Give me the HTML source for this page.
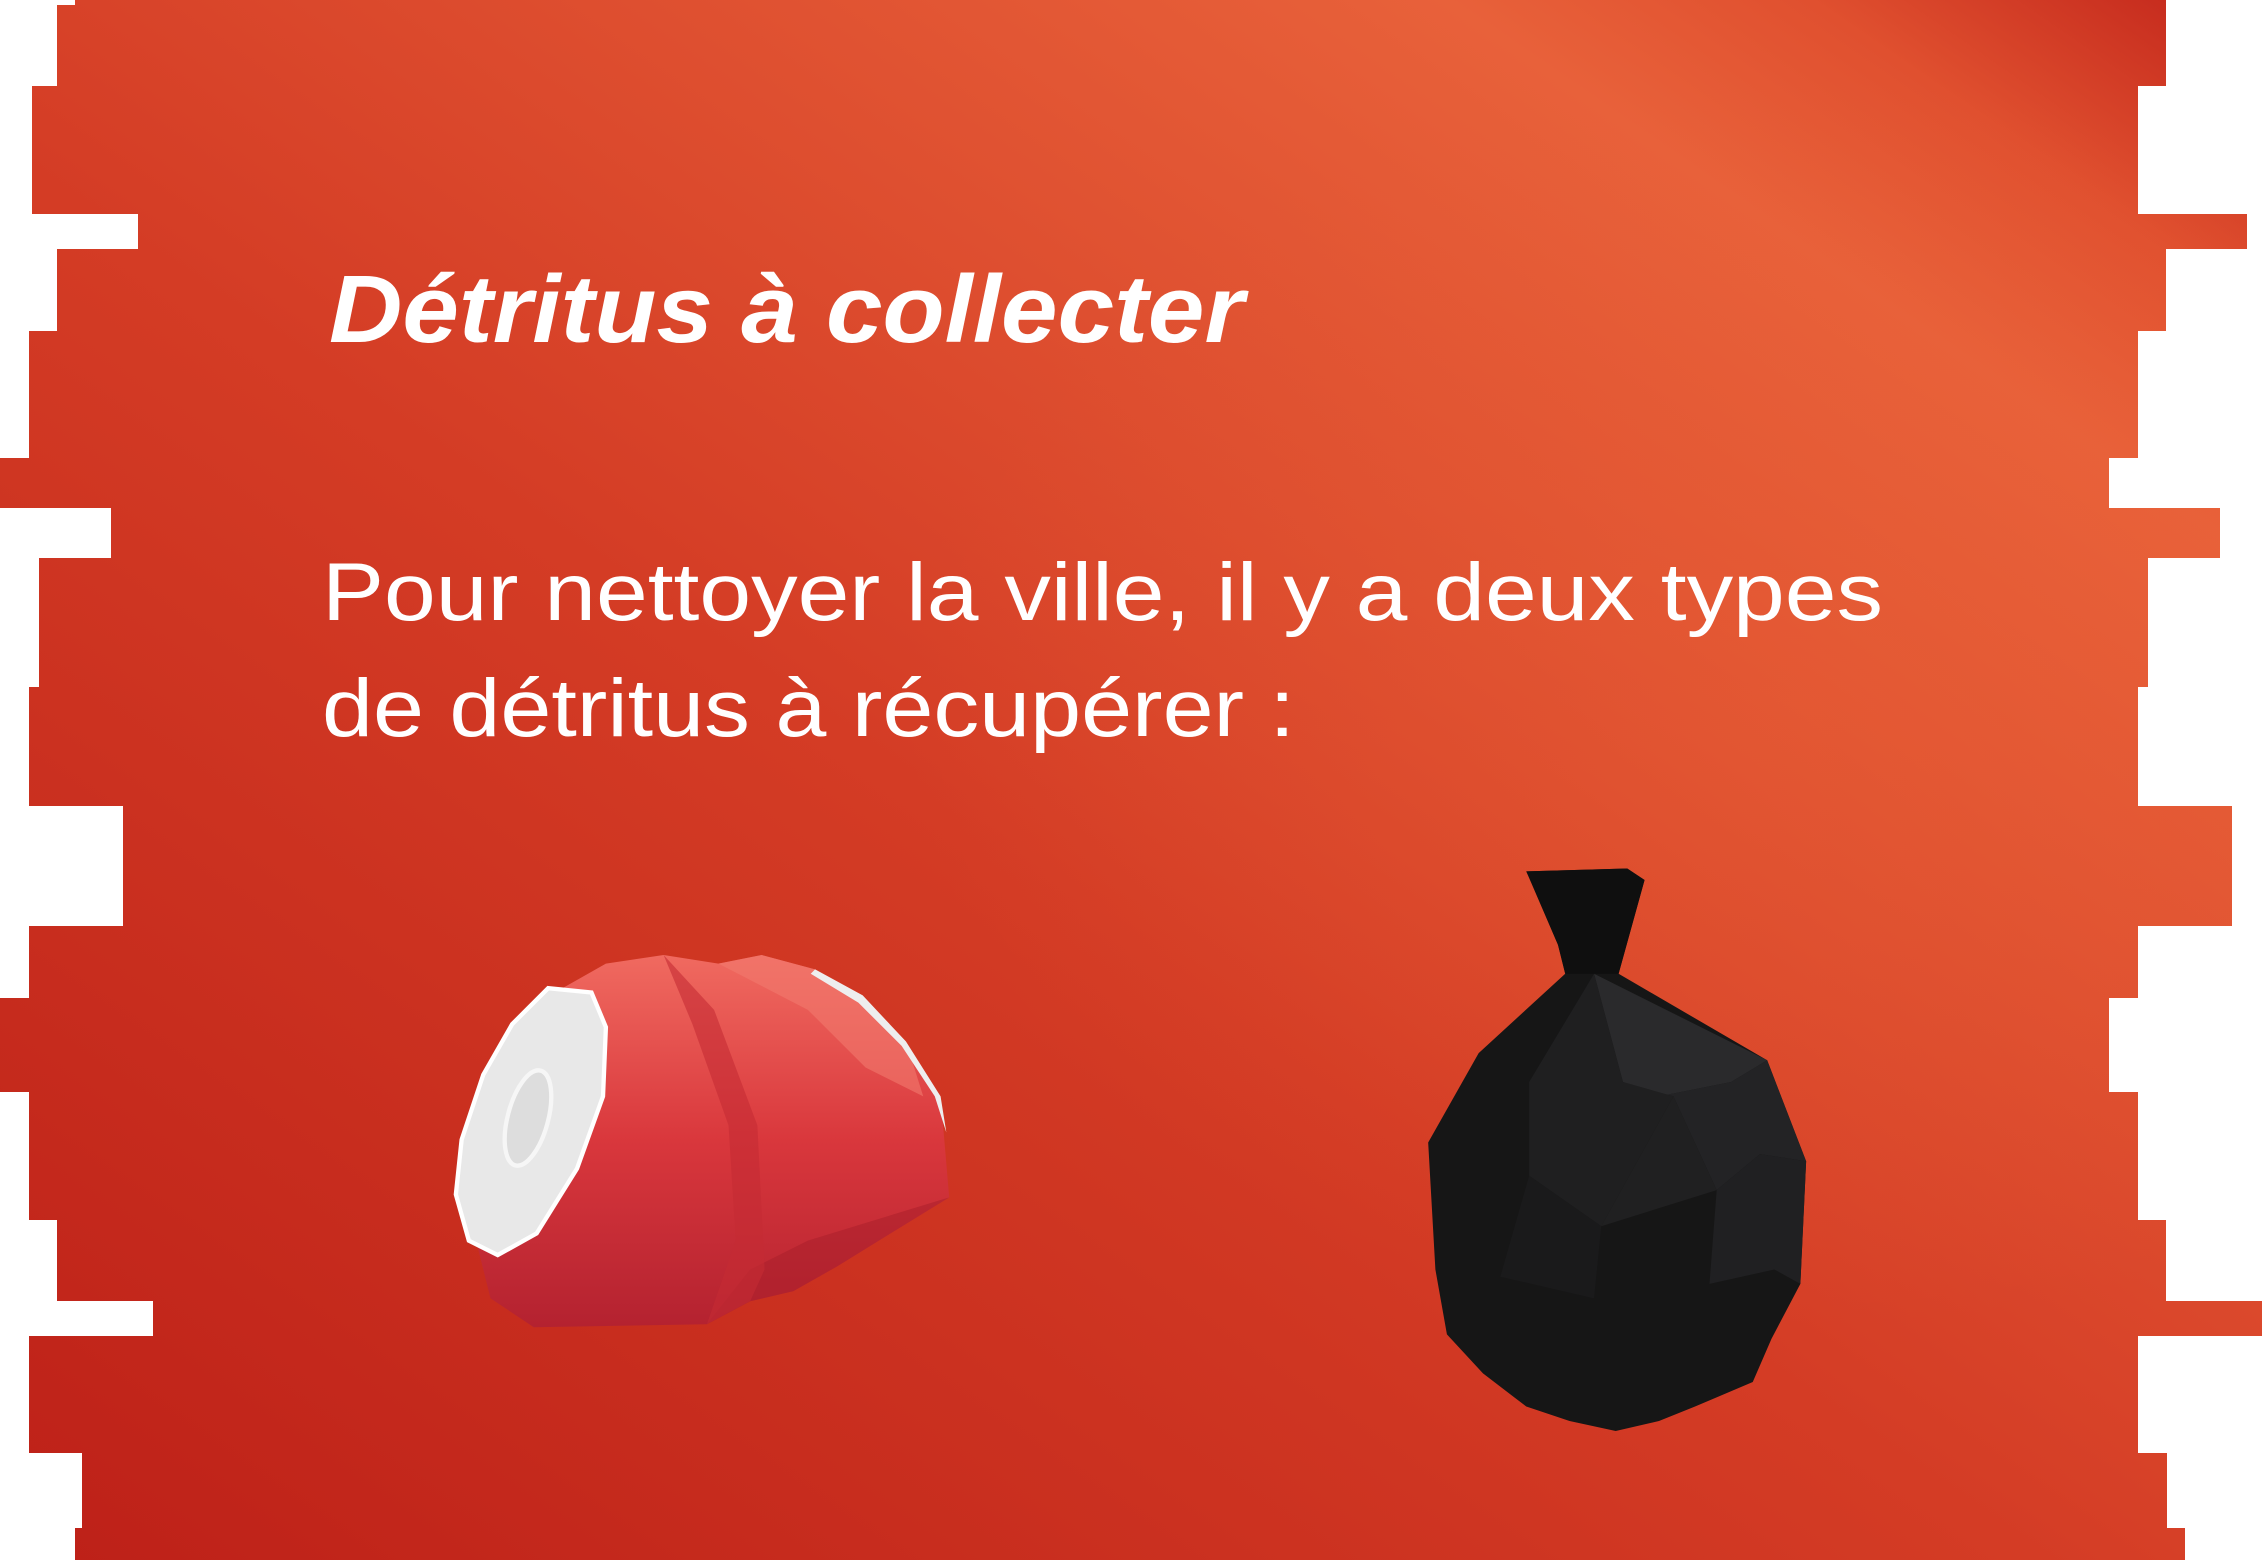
<!DOCTYPE html>
<html><head><meta charset="utf-8"><style>
html,body{margin:0;padding:0;background:#fff;}
svg{display:block;}
</style></head><body>
<svg width="2262" height="1560" viewBox="0 0 2262 1560" xmlns="http://www.w3.org/2000/svg">
<defs>
<linearGradient id="g1" x1="0" y1="1" x2="1" y2="0">
<stop offset="0" stop-color="#bd2018"/>
<stop offset="0.45" stop-color="#d43c25"/>
<stop offset="0.82" stop-color="#e8613a"/>
<stop offset="0.9" stop-color="#e0502f"/>
<stop offset="1" stop-color="#c0231a"/>
</linearGradient>
<radialGradient id="g2" cx="0.8" cy="0.45" r="0.4">
<stop offset="0" stop-color="#ea6236" stop-opacity="0.35"/>
<stop offset="1" stop-color="#ea6236" stop-opacity="0"/>
</radialGradient>
<linearGradient id="canG" x1="0" y1="0" x2="0" y2="1">
<stop offset="0" stop-color="#f06a60"/>
<stop offset="0.5" stop-color="#d9373c"/>
<stop offset="1" stop-color="#b42230"/>
</linearGradient>
<clipPath id="cp"><polygon points="75,0 2166,0 2166,86 2138,86 2138,214 2247,214 2247,249 2166,249 2166,331 2138,331 2138,458 2109,458 2109,508 2220,508 2220,558 2148,558 2148,687 2138,687 2138,806 2232,806 2232,926 2138,926 2138,998 2109,998 2109,1092 2138,1092 2138,1220 2166,1220 2166,1301 2262,1301 2262,1336 2138,1336 2138,1453 2167,1453 2167,1528 2185,1528 2185,1560 75,1560 75,1528 82,1528 82,1453 29,1453 29,1336 153,1336 153,1301 57,1301 57,1220 29,1220 29,1092 0,1092 0,998 29,998 29,926 123,926 123,806 29,806 29,687 39,687 39,558 111,558 111,508 0,508 0,458 29,458 29,331 57,331 57,249 138,249 138,214 32,214 32,86 57,86 57,5 75,5"/></clipPath>
</defs>
<g clip-path="url(#cp)">
<rect width="2262" height="1560" fill="url(#g1)"/>
<rect width="2262" height="1560" fill="url(#g2)"/>
</g>
<text x="329" y="342" font-family="Liberation Sans Narrow, Liberation Sans, sans-serif" font-weight="bold" font-style="italic" font-size="96" fill="#fff" textLength="915" lengthAdjust="spacingAndGlyphs">Détritus à collecter</text>
<text x="322" y="620" font-family="Liberation Sans, sans-serif" font-size="82" fill="#fff" textLength="1561" lengthAdjust="spacingAndGlyphs">Pour nettoyer la ville, il y a deux types</text>
<text x="322" y="736" font-family="Liberation Sans, sans-serif" font-size="82" fill="#fff" textLength="973" lengthAdjust="spacingAndGlyphs">de détritus à récupérer :</text>
<g transform="scale(1.4426)">
<polygon fill="url(#canG)" points="330,860 340,900 370,920 490,918 520,902 550,895 580,878 658,830 652,760 628,722 598,690 565,672 528,662 498,668 460,662 420,668 390,685"/>
<polygon fill="#f27a6e" opacity="0.6" points="498,668 528,662 565,672 598,690 628,722 640,760 600,740 560,700"/>
<polygon fill="#a81e2a" opacity="0.5" points="490,918 520,902 550,895 580,878 658,830 560,860 520,880"/>
<polygon fill="#c42c34" opacity="0.6" points="460,662 495,700 525,780 530,880 520,902 490,918 510,860 505,780 480,710"/>
<polygon fill="#eee" points="565,672 598,690 628,722 652,760 656,785 648,760 625,725 595,695 562,675"/>
<polygon fill="#e8e8e8" stroke="#fff" stroke-width="3" points="380,685 410,688 420,712 418,760 400,810 372,855 345,870 325,860 316,828 320,790 335,745 355,710"/>
<ellipse cx="366" cy="775" rx="14" ry="34" transform="rotate(15 366 775)" fill="#ddd" stroke="#f6f6f6" stroke-width="3"/>
<polygon fill="#161616" points="1058,604 1128,602 1140,610 1122,675 1225,735 1252,805 1248,890 1228,928 1215,958 1175,975 1150,985 1120,992 1088,985 1058,975 1028,952 1003,925 995,880 990,792 1025,730 1085,675 1080,655 1060,608"/>
<polygon fill="#2a2a2c" points="1105,675 1225,735 1200,750 1150,760 1125,750"/>
<polygon fill="#232325" points="1125,750 1150,760 1200,750 1225,735 1252,805 1220,800 1190,825 1160,760"/>
<polygon fill="#1f1f20" points="1060,750 1105,675 1125,750 1160,760 1110,850 1060,815"/>
<polygon fill="#202021" points="1110,850 1160,760 1190,825"/>
<polygon fill="#1a1a1b" points="1040,885 1060,815 1110,850 1105,900"/>
<polygon fill="#202022" points="1185,890 1190,825 1220,800 1252,805 1248,890 1230,880"/>
<polygon fill="#0f0f0f" points="1080,655 1085,675 1105,675 1122,675 1140,610 1128,602 1058,604"/>
</g>
</svg>
</body></html>
